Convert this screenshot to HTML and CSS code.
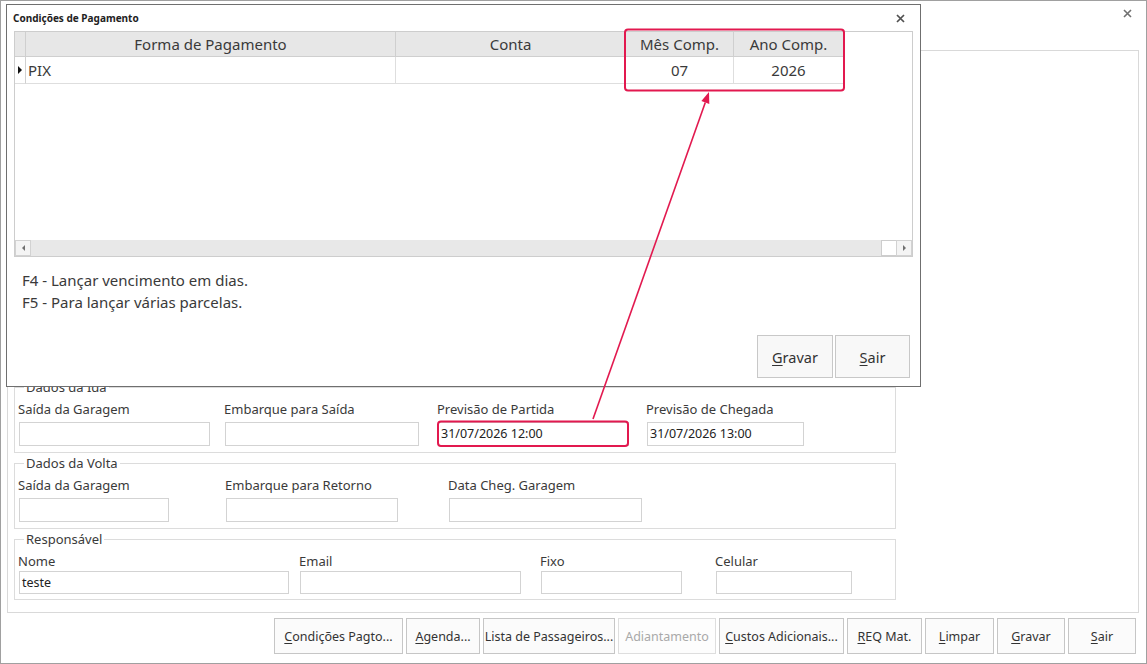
FILE: index.html
```html
<!DOCTYPE html>
<html lang="pt-BR">
<head>
<meta charset="utf-8">
<title>Condições de Pagamento</title>
<link rel="stylesheet" href="styles.css">
</head>
<body>
<div class="window">
  <div class="win-top">
    <svg class="x-icon" width="9" height="9" viewBox="0 0 9 9"><path d="M1 1L8 8M8 1L1 8" stroke="#707070" stroke-width="1.6"/></svg>
  </div>
  <div class="panel">
    <div class="group">
      <span class="legend">Dados da Ida</span>
      <div class="row">
        <div class="field ida-1"><span class="lbl">Saída da Garagem</span><div class="inp"></div></div>
        <div class="field ida-2"><span class="lbl">Embarque para Saída</span><div class="inp"></div></div>
        <div class="field ida-3"><span class="lbl">Previsão de Partida</span><div class="inp">31/07/2026 12:00</div></div>
        <div class="field ida-4"><span class="lbl">Previsão de Chegada</span><div class="inp">31/07/2026 13:00</div></div>
      </div>
    </div>
    <div class="group">
      <span class="legend">Dados da Volta</span>
      <div class="row">
        <div class="field vol-1"><span class="lbl">Saída da Garagem</span><div class="inp"></div></div>
        <div class="field vol-2"><span class="lbl">Embarque para Retorno</span><div class="inp"></div></div>
        <div class="field vol-3"><span class="lbl">Data Cheg. Garagem</span><div class="inp"></div></div>
      </div>
    </div>
    <div class="group resp">
      <span class="legend">Responsável</span>
      <div class="row">
        <div class="field res-1"><span class="lbl">Nome</span><div class="inp">teste</div></div>
        <div class="field res-2"><span class="lbl">Email</span><div class="inp"></div></div>
        <div class="field res-3"><span class="lbl">Fixo</span><div class="inp"></div></div>
        <div class="field res-4"><span class="lbl">Celular</span><div class="inp"></div></div>
      </div>
    </div>
  </div>
  <div class="actions">
    <button class="btn b-cond"><u>C</u>ondições Pagto...</button>
    <button class="btn b-agen"><u>A</u>genda...</button>
    <button class="btn b-lista">Lista de Passageiros...</button>
    <button class="btn b-adi disabled">Adiantamento</button>
    <button class="btn b-cust"><u>C</u>ustos Adicionais...</button>
    <button class="btn b-req"><u>R</u>EQ Mat.</button>
    <button class="btn b-limp"><u>L</u>impar</button>
    <button class="btn b-grav"><u>G</u>ravar</button>
    <button class="btn b-sair"><u>S</u>air</button>
  </div>
</div>

<div class="dialog">
  <div class="dlg-title">
    <span class="dlg-caption">Condições de Pagamento</span>
    <svg class="x-icon" width="9" height="9" viewBox="0 0 9 9"><path d="M1 1L8 8M8 1L1 8" stroke="#505050" stroke-width="1.7"/></svg>
  </div>
  <div class="grid">
    <div class="g-head">
      <div class="c c-ind"></div>
      <div class="c c-forma">Forma de Pagamento</div>
      <div class="c c-conta">Conta</div>
      <div class="c c-mes">Mês Comp.</div>
      <div class="c c-ano">Ano Comp.</div>
    </div>
    <div class="g-row">
      <div class="c c-ind"><span class="tri"></span></div>
      <div class="c c-forma left">PIX</div>
      <div class="c c-conta"></div>
      <div class="c c-mes">07</div>
      <div class="c c-ano">2026</div>
    </div>
    <div class="g-empty"></div>
    <div class="hscroll">
      <div class="sb-btn"><span class="tri-l"></span></div>
      <div class="sb-track"></div>
      <div class="sb-thumb"></div>
      <div class="sb-btn"><span class="tri-r"></span></div>
    </div>
  </div>
  <div class="hints">
    <div>F4 - Lançar vencimento em dias.</div>
    <div>F5 - Para lançar várias parcelas.</div>
  </div>
  <div class="dlg-actions">
    <button class="dbtn"><u>G</u>ravar</button>
    <button class="dbtn"><u>S</u>air</button>
  </div>
</div>

<svg class="annot" width="1147" height="664" viewBox="0 0 1147 664">
  <rect x="625" y="29.5" width="219" height="61" rx="3" fill="none" stroke="#e2194f" stroke-width="2"/>
  <rect x="438" y="421.5" width="190" height="24.5" rx="3" fill="none" stroke="#e2194f" stroke-width="2"/>
  <line x1="593" y1="419" x2="705.3" y2="102.4" stroke="#e2194f" stroke-width="1.6"/>
  <polygon points="709,92 709.3,103.9 701.4,101.0" fill="#e2194f"/>
</svg>
</body>
</html>
```

FILE: styles.css
```css
* { box-sizing: border-box; }
html, body { margin: 0; padding: 0; background: #fff; }
body {
  width: 1147px;
  height: 664px;
  position: relative;
  overflow: hidden;
  font-family: "Noto Sans", "Open Sans", sans-serif;
  color: #3a3a3a;
}

/* ---------- main window ---------- */
.window {
  width: 1147px;
  height: 664px;
  border: 1px solid #a0a0a0;
  display: flex;
  flex-direction: column;
  background: #fff;
}
.win-top {
  height: 49px;
  display: flex;
  justify-content: flex-end;
  align-items: flex-start;
  padding: 8px 14px 0 0;
}
.x-icon { display: block; }

.panel {
  height: 563px;
  margin: 0 7px 0 6px;
  border: 1px solid #d9d9d9;
  padding: 336px 0 0 6px;
  display: flex;
  flex-direction: column;
  gap: 10px;
}
.group {
  width: 882px;
  border: 1px solid #dcdcdc;
  padding: 0 0 6px 4px;
}
.legend {
  display: block;
  width: max-content;
  margin: -9px 0 0 5px;
  padding: 0 2px;
  background: #fff;
  font-size: 13px;
  line-height: 16px;
  color: #3a3a3a;
}
.row {
  display: flex;
  margin-top: 6px;
}
.field {
  display: flex;
  flex-direction: column;
}
.lbl {
  font-size: 13px;
  line-height: 16px;
  white-space: nowrap;
  color: #3a3a3a;
  margin-left: -1px;
}
.inp {
  margin-top: 5px;
  height: 24px;
  border: 1px solid #d3d3d3;
  background: #fff;
  font-size: 12.5px;
  line-height: 22px;
  padding-left: 2px;
  color: #222;
  white-space: nowrap;
}
.resp { padding-bottom: 5px; }
.resp .inp { margin-top: 2px; height: 23px; line-height: 21px; }

.ida-1 { width: 191px; }
.ida-2 { width: 194px; margin-left: 15px; }
.ida-3 { width: 191px; margin-left: 19px; }
.ida-4 { width: 157px; margin-left: 18px; }
.vol-1 { width: 150px; }
.vol-2 { width: 172px; margin-left: 57px; }
.vol-3 { width: 193px; margin-left: 51px; }
.res-1 { width: 270px; }
.res-2 { width: 221px; margin-left: 11px; }
.res-3 { width: 141px; margin-left: 20px; }
.res-4 { width: 136px; margin-left: 34px; }

.actions {
  display: flex;
  gap: 3px;
  margin: 5px 0 0 273px;
}
.btn {
  height: 36px;
  border: 1px solid #c6c6c6;
  background: #fbfbfb;
  font-family: "Noto Sans", "Open Sans", sans-serif;
  font-size: 12.5px;
  color: #333;
  padding: 0;
  white-space: nowrap;
}
.btn u, .dbtn u { text-underline-offset: 2px; }
.btn.disabled { color: #a9a9a9; border-color: #dedede; background: #fdfdfd; }
.b-cond { width: 129px; }
.b-agen { width: 74px; }
.b-lista { width: 132px; }
.b-adi { width: 98px; }
.b-cust { width: 125px; }
.b-req { width: 75px; }
.b-limp { width: 69px; }
.b-grav { width: 68px; }
.b-sair { width: 68px; }

/* ---------- dialog ---------- */
.dialog {
  position: absolute;
  left: 6px;
  top: 4px;
  width: 915px;
  height: 383px;
  border: 1px solid #6f6f6f;
  background: #fff;
  display: flex;
  flex-direction: column;
  z-index: 2;
}
.dlg-title {
  height: 26px;
  display: flex;
  justify-content: space-between;
  align-items: center;
  padding: 0 15px 0 6px;
}
.dlg-caption {
  font-size: 10px;
  font-weight: 700;
  color: #222;
}
.grid {
  margin-left: 7px;
  width: 899px;
  height: 226px;
  border: 1px solid #cdcdcd;
  display: flex;
  flex-direction: column;
}
.g-head, .g-row { display: flex; }
.g-head .c {
  height: 25px;
  background: #e7e7e7;
  border-right: 1px solid #cfcfcf;
  border-bottom: 1px solid #cfcfcf;
  font-size: 15px;
  line-height: 24px;
  text-align: center;
  color: #3a3a3a;
}
.g-row .c {
  height: 27px;
  border-right: 1px solid #dedede;
  border-bottom: 1px solid #dedede;
  font-size: 15px;
  line-height: 27px;
  text-align: center;
  color: #3a3a3a;
}
.c { white-space: nowrap; }
.c.left { text-align: left; padding-left: 2px; }
.c-ind { width: 11px; position: relative; }
.c-forma { width: 370px; }
.c-conta { width: 230px; }
.c-mes { width: 108px; }
.c-ano { width: 110px; }
.g-row .c-ind { border-right-color: #d0d0d0; }
.tri {
  position: absolute;
  left: 3px;
  top: 9px;
  width: 0;
  height: 0;
  border-top: 4px solid transparent;
  border-bottom: 4px solid transparent;
  border-left: 4px solid #111;
}
.g-empty { flex: 1; }
.hscroll {
  height: 16px;
  display: flex;
  background: #e8e8e8;
}
.sb-btn {
  width: 16px;
  height: 16px;
  background: #f4f4f4;
  border: 1px solid #d2d2d2;
  display: flex;
  align-items: center;
  justify-content: center;
}
.sb-track { flex: 1; }
.sb-thumb {
  width: 15px;
  height: 16px;
  background: #fff;
  border: 1px solid #cdcdcd;
  border-right: none;
}
.tri-l {
  width: 0; height: 0;
  border-top: 3px solid transparent;
  border-bottom: 3px solid transparent;
  border-right: 3px solid #707070;
}
.tri-r {
  width: 0; height: 0;
  border-top: 3px solid transparent;
  border-bottom: 3px solid transparent;
  border-left: 3px solid #707070;
}
.hints {
  margin: 12px 0 0 15px;
  font-size: 15px;
  line-height: 22px;
  color: #3a3a3a;
}
.dlg-actions {
  margin-top: auto;
  margin-bottom: 8px;
  display: flex;
  justify-content: flex-end;
  gap: 2px;
  padding-right: 10px;
}
.dbtn {
  width: 76px;
  height: 43px;
  border: 1px solid #c8c8c8;
  background: #f8f8f8;
  font-family: "Noto Sans", "Open Sans", sans-serif;
  font-size: 14.5px;
  color: #333;
  padding: 0;
}
.dbtn + .dbtn { width: 75px; }

/* ---------- annotation overlay ---------- */
.annot {
  position: absolute;
  left: 0;
  top: 0;
  z-index: 5;
  pointer-events: none;
}
```
